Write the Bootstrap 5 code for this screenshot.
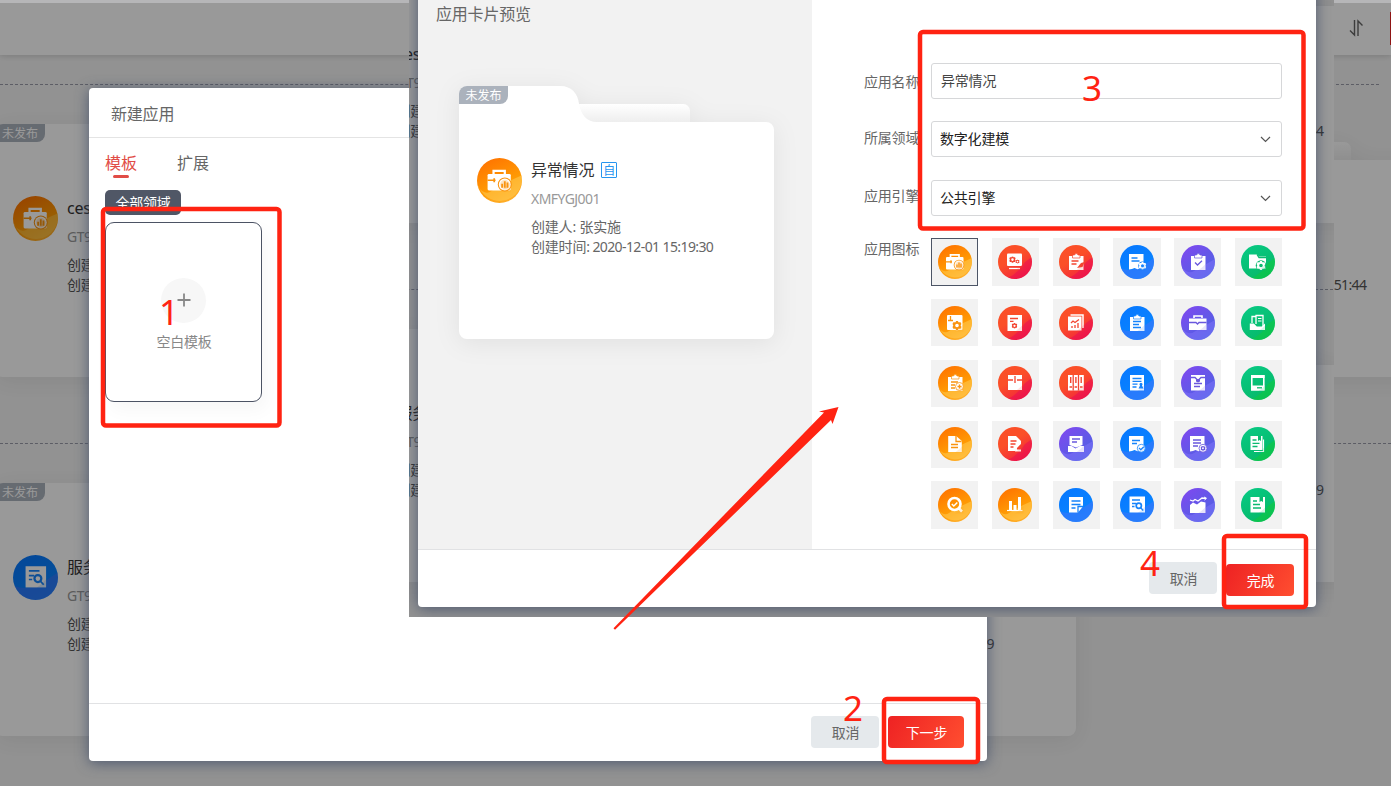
<!DOCTYPE html>
<html lang="zh-CN">
<head>
<meta charset="utf-8">
<title>新建应用</title>
<link href="https://cdn.jsdelivr.net/npm/bootstrap@5.3.0/dist/css/bootstrap.min.css" rel="stylesheet">
<style>
body{font-family:"Noto Sans","Noto Sans CJK SC",sans-serif;font-size:14px;line-height:20px;color:#666;width:1391px;height:786px;overflow:hidden;background:#939393;letter-spacing:-.2px}
.num{letter-spacing:-.54px}
.desk{height:786px;overflow:hidden}
.apps{width:1391px;background:#f4f4f4}
.apps-head{height:55px;background:#fff;box-shadow:0 1px 6px rgba(0,0,0,.16);padding-right:26px;position:relative}
.apps-head::after{content:"";position:absolute;right:0;top:12px;width:1px;height:33px;background:#e22}
.rule{border-top:1px dashed #9a9ca8}
.rule-a{width:1379px;margin-top:29px}
.apps-row{width:1454px;margin-left:-5px;gap:36.5px}
.folder{position:relative;height:253px;flex:none;width:336px;color:#555}
.folder>.shape{position:absolute;inset:0;overflow:visible;filter:drop-shadow(0 4px 12px rgba(0,0,0,.07))}
.folder>.inner{position:relative;padding:72px 0 0 18px}
.flag{position:absolute;left:0;top:0;width:49px;height:18px;background:#abb2bc;color:#fff;font-size:12px;line-height:19px;border-radius:8px 0 8px 0;text-align:center;letter-spacing:0}
.app-name{font-size:16px;line-height:22px;color:#333;padding-top:1px}
.app-code{line-height:20px;color:#999;margin-top:8px;margin-bottom:8px}
.shade{position:absolute;inset:0;background:rgba(0,0,0,.4)}
.topstrip{position:absolute;left:0;top:0;width:1391px;height:3px;background:#b6b6b8}
.dlg{position:absolute;background:#fff;width:898px;box-shadow:0 2px 14px rgba(55,70,100,.75)}
.dlg-one{left:89px;top:88px;height:673px;border-radius:4px}
.dlg-head{height:50px;font-size:16px;line-height:52px;padding-left:22px;border-bottom:1px solid #e4e4e4}
.dlg-foot{border-top:1px solid #e1e2e4;height:58px;padding:12px 22px 0}
.tab-on{color:#e14c46;position:relative}
.tab-on::after{content:"";position:absolute;left:8px;width:16px;top:24px;height:3px;border-radius:2px;background:#e14c46}
.chip{width:76px;height:25px;border-radius:5px;background:#505766;color:#fff;line-height:25px;text-align:center}
.blank{width:157px;height:180px;border:1px solid #4c5364;border-radius:9px;box-shadow:5px 8px 18px rgba(0,0,0,.035);color:#888}
.plus{width:45px;height:45px;border-radius:50%;background:#f7f7f7}
.btn-x{height:32px;border-radius:4px;line-height:33px;text-align:center;border:0;padding:0 0 0 1px;font-size:14px;letter-spacing:-.2px;background:#e5e9ec;color:#666;width:68px}
.btn-go{background:linear-gradient(120deg,#ee2223,#ff4e30);color:#fff;width:76px}
.shot{position:absolute;left:409px;top:0;width:925px;height:617px;overflow:hidden;background:#939393}
.shift{margin:-154px 0 0 -452px;width:1391px}
.dlg-two{left:9px;top:-40px;height:647px;border-radius:0 0 4px 4px}
.preview{width:394px;background:#f2f2f2;padding:44px 0 0 18px;font-size:16px}
.preview .folder{margin:62px 0 0 23px;font-size:14px;color:#666;width:315px}
.self{width:16px;height:16px;border:1px solid #2795f0;color:#2795f0;font-size:12px;line-height:15px;text-align:center;border-radius:1px;letter-spacing:0}
.lab{width:67px;flex:none}
.box{width:351px;height:36px;border:1px solid #d6d7d9;border-radius:3px;padding:0 10px 2px 9px;font-size:14px;letter-spacing:-.2px;color:#444;line-height:34px;box-shadow:none}
.sel{color:#222;padding:0 10px 0 8px}
.icons{display:grid;grid-template-columns:repeat(6,47.25px);gap:13.5px;grid-auto-rows:47.25px}
.tile{background:#f2f2f2;padding:6.6px}
.tile.on{outline:1px solid #4c5566;outline-offset:-1px}
.tile svg{width:34px;height:34px;display:block}
.big{width:45px;height:45px;display:block;flex:none}
.marks{position:absolute;left:0;top:0}
</style>
</head>
<body>
<svg width="0" height="0" style="position:absolute" aria-hidden="true"><defs>
<linearGradient id="go" x1=".2" y1="0" x2=".7" y2="1"><stop stop-color="#ff7200"/><stop offset=".6" stop-color="#ff9a04"/><stop offset="1" stop-color="#ffb02c"/></linearGradient>
<linearGradient id="gr" x1=".2" y1="0" x2=".8" y2="1"><stop offset=".4" stop-color="#fb4f28"/><stop offset="1" stop-color="#f0203f"/></linearGradient>
<linearGradient id="gb" x1=".2" y1="0" x2=".8" y2="1"><stop stop-color="#0778ff"/><stop offset="1" stop-color="#0a88ff"/></linearGradient>
<linearGradient id="gp" x1=".1" y1="0" x2=".9" y2="1"><stop stop-color="#8048f0"/><stop offset="1" stop-color="#4766e0"/></linearGradient>
<linearGradient id="gg" x1=".2" y1="0" x2=".8" y2="1"><stop stop-color="#08c983"/><stop offset="1" stop-color="#06b767"/></linearGradient>
<linearGradient id="bt" x1="0" y1="0" x2="0" y2="1"><stop stop-color="#fff"/><stop offset="1" stop-color="#ececec"/></linearGradient>
<clipPath id="disc"><circle cx="17" cy="17" r="17"/></clipPath>
<symbol id="gear" viewBox="-5 -5 10 10"><path d="M-1-4.6h2l.5 1.3 1-.1 1.200 0 1 1.800-.8 1.100v1l.8 1.100-1 1.800H2.400l-.9.1L1 4.600h-2l-.5-1.300-1.300.1-1 0-1-1.800.8-1.100v-1l-.8-1.100 1-1.800h1.300l1 .1zM0-1.900A1.900 1.900 0 1 0 0 1.900 1.900 1.900 0 1 0 0-1.900z" fill-rule="evenodd"/></symbol>
</defs></svg>

<div class="desk position-relative">
  <div id="page-a"></div>
  <div class="shade"></div>
  <div class="topstrip"></div>

  <section class="dlg dlg-one d-flex flex-column">
    <div class="dlg-head">新建应用</div>
    <div class="flex-grow-1 px-3">
      <div class="d-flex fs-6" style="padding-top:13px;gap:40px;line-height:24px;letter-spacing:0"><span class="tab-on">模板</span><span>扩展</span></div>
      <div class="chip" style="margin-top:15px">全部领域</div>
      <div class="blank d-flex flex-column align-items-center" style="margin-top:7px;padding-top:55px">
        <div class="plus d-flex align-items-center justify-content-center"><svg width="14" height="14" style="margin-top:-2px"><path d="M7 .5v13M.5 7h13" stroke="#888" stroke-width="1.800"/></svg></div>
        <div style="margin-top:9px;padding-left:1px">空白模板</div>
      </div>
    </div>
    <div class="dlg-foot d-flex justify-content-end" style="gap:9px;padding-right:23px"><button class="btn-x">取消</button><button class="btn-x btn-go">下一步</button></div>
  </section>

  <div class="shot">
    <div class="shift" id="page-b"></div>
    <div class="shade"></div>
    <section class="dlg dlg-two d-flex flex-column">
      <div class="d-flex flex-grow-1">
        <div class="preview">应用卡片预览
          <div class="folder">
            <svg class="shape" width="315" height="253"><path d="M115 18H224a7 7 0 0 1 7 7V38H115z" fill="url(#bt)"/><path d="M0 8a8 8 0 0 1 8-8H101c12 0 18 8 19 18 2 11 8 18 18 18H307a8 8 0 0 1 8 8V245a8 8 0 0 1-8 8H8a8 8 0 0 1-8-8z" fill="#fff"/></svg>
            <div class="flag">未发布</div>
            <div class="inner d-flex" style="gap:9px"><svg class="big" viewBox="0 0 34 34" data-icon="o0"></svg>
              <div>
                <div class="app-name d-flex align-items-center" style="gap:7px">异常情况<span class="self">自</span></div>
                <div class="app-code num">XMFYGJ001</div>
                <div>创建人: 张实施</div>
                <div>创建时间<span class="num" style="letter-spacing:-.6px">: 2020-12-01 15:19:30</span></div>
              </div></div>
          </div>
        </div>
        <div class="flex-grow-1" style="padding:103px 0 0 52px">
          <div class="d-flex"><div class="lab" style="padding-top:9px">应用名称</div><input class="form-control box" value="异常情况"></div>
          <div class="d-flex" style="margin-top:22px"><div class="lab" style="padding-top:7px">所属领域</div><div class="box sel d-flex justify-content-between align-items-center">数字化建模<svg width="11" height="7"><path d="M1 1l4.500 4.500L10 1" fill="none" stroke="#555" stroke-width="1.200"/></svg></div></div>
          <div class="d-flex" style="margin-top:23px"><div class="lab" style="padding-top:6px">应用引擎</div><div class="box sel d-flex justify-content-between align-items-center">公共引擎<svg width="11" height="7"><path d="M1 1l4.500 4.500L10 1" fill="none" stroke="#555" stroke-width="1.200"/></svg></div></div>
          <div class="d-flex" style="margin-top:22.400px"><div class="lab" style="padding-top:1px">应用图标</div><div class="icons" id="icons"></div></div>
        </div>
      </div>
      <div class="dlg-foot d-flex justify-content-end" style="gap:9px"><button class="btn-x">取消</button><button class="btn-x btn-go" style="width:68px;margin-top:2px;line-height:31px">完成</button></div>
    </section>
  </div>

  <svg class="marks" width="1391" height="786" fill="none" stroke="#ff2312" stroke-width="4.500">
    <rect x="103" y="209" width="176.500" height="216.500" rx="3"/>
    <rect x="920" y="32" width="383.500" height="196.500" rx="3"/>
    <rect x="884" y="699" width="94" height="63" rx="3"/>
    <rect x="1224" y="536" width="82" height="71" rx="3"/>
    <path d="M613.500 628.300L824 412.500 819 411.500 838.500 407 832.500 424 831 420 615 629.700z" fill="#ff2312" stroke="none"/>
    <g fill="#ff2312" stroke="none" font-size="35"><text x="159" y="325">1</text><text x="843" y="721">2</text><text x="1082" y="101">3</text><text x="1140" y="576">4</text></g>
  </svg>
</div>

<template id="page">
  <div class="apps">
    <div class="apps-head d-flex justify-content-end align-items-center"><svg width="17" height="18" viewBox="0 0 17 18" fill="none" stroke="#666" stroke-width="1.400"><path d="M6.500 1v15L2 11.500M10 17V2l4.500 4.500"/></svg></div>
    <div class="rule rule-a"></div>
    <div class="apps-row d-flex" style="margin-top:39px" data-row="1"></div>
    <div class="rule" style="margin-top:66px"></div>
    <div class="apps-row d-flex" style="margin-top:39px" data-row="2"></div>
    <div style="height:110px"></div>
  </div>
</template>

<script src="https://cdn.jsdelivr.net/npm/bootstrap@5.3.0/dist/js/bootstrap.bundle.min.js"></script>
<script>
// Glyphs on a 34 x 34 grid: white shapes, details in the disc's colour (currentColor)
const doc='<path d="M9 9h14.500v15l-3-1-3 1.200-3-1.200-2.500 1L9 24.500z"/>';
const L=d=>`<path d="${d}" fill="none" stroke="currentColor" stroke-width="1.300"/>`;
const W=(d,w=1.2)=>`<path d="${d}" fill="none" stroke="#fff" stroke-width="${w}"/>`;
const clip='<path d="M10 11h14.500v14H10z"/><path d="M13.500 13v-3h2a1.800 1.800 0 0 1 3.500 0h2v3z" stroke="currentColor" stroke-width=".7"/>';
const gear=(x,y,s,c)=>`<use href="#gear" x="${x-s}" y="${y-s}" width="${2*s}" height="${2*s}" fill="${c}"/>`;
const ring=(x,y,r=4)=>`<circle cx="${x}" cy="${y}" r="${r}" fill="#fff" stroke="currentColor" stroke-width=".8"/>`;
const G={
case1:'<rect x="8" y="12" width="17.500" height="12.500" rx="1"/>'+W('M12.500 12V9.800h8.500V12',1.700)+L('M8 16.800h6M13 15.300v3')+'<circle cx="21" cy="20" r="5.300" fill="currentColor"/><circle cx="21" cy="20" r="4.500" fill="#fff"/><circle cx="21" cy="20" r="3.500" fill="currentColor" opacity=".25"/><path d="M19 22.500v-3M21 22.500v-5M23 22.500v-4" stroke="currentColor" stroke-width="1.400"/>',
screen:'<rect x="9" y="8.500" width="15" height="12.500" rx="1"/>'+W('M11 23.500h11',1.300)+gear(14.500,14.600,3.400,'currentColor')+gear(19.500,16.600,2.200,'currentColor'),
clipPen:clip+L('M12.500 16h7M12.500 19h5')+'<path d="M18 23l4-5 3.500-1-2 5z" fill="currentColor"/>',
docGear:doc+L('M11.500 13h6M11.500 16h8')+'<circle cx="22.500" cy="20.700" r="4.300" fill="currentColor"/>'+gear(22.500,20.700,4,'#fff'),
clipCheck:clip+L('M14 17.500l2.500 2.500 4.500-4.300'),
foldGear:'<path d="M8 9.500h8l2 2h7v12H8z"/>'+L('M16 9.500l2 3h7')+'<circle cx="20" cy="20.500" r="5.300" fill="currentColor"/>'+gear(20,20.500,4.800,'#fff'),
winGear:'<rect x="9" y="9" width="15.500" height="15" rx="1"/>'+L('M12.500 10v4M10 14.500h5')+'<circle cx="19" cy="19.500" r="4.800" fill="#fff"/>'+gear(19,19.500,4.800,'currentColor'),
docDot:'<rect x="9.500" y="9" width="14.500" height="16"/>'+L('M12 12.500h8M12 15.300h3.500')+gear(16.500,19.800,3,'currentColor'),
chart:W('M11.500 9h12.500v13',1.500)+'<path d="M9 10.500h13.500V24.500H9z"/>'+L('M12 17l2-2 2 1.500 4-3M13 22v-2M16 22v-3M19 22v-5'),
clipLines:clip+L('M13 15.500h8M13 18.500h6M13 21.500h8'),
case2:'<path d="M8 12.500h17.500V24H8z"/>'+W('M13 12v-2h8v2',1.600)+L('M8 16.500h7l1.500 1.500L18 16.500h7.500'),
tray:W('M11 17v-6.500h3.500M15 18V9.500h7V20',1.300)+L('M17 13h3')+W('M17 12.500h3.500M17 15h3.500',1)+'<path d="M8.800 17.500h4l3 3h5l3.200-3V24H8.800z"/>',
clipPlus:clip+L('M13 16h7M13 19h4M13 22h4')+ring(21.500,20.500)+L('M19.500 20.500h4M21.500 18.500v4'),
box:'<path d="M10 9h14v15H10z"/>'+L('M10 14h5M19 14h5M17 10v7'),
binders:'<path d="M9 9h15.800v15.500H9z"/>'+L('M14.200 9v15.500M19.500 9v15.500')+'<path d="M11 11v6h1.400v-6zM16.200 11v6h1.400v-6zM21.500 11v6h1.400v-6z" fill="currentColor"/>'+L('M10.500 21h2.500M15.600 21h2.500M21 21h2.500'),
docMan:'<path d="M10 9h14v15.500H10z"/>'+L('M12.500 12.500h9M12.500 15.300h9M12.500 18.200h5M12.500 21h4')+'<path d="M18.500 22.500h5l-1.500-3a1.500 1.500 0 1 0-2 0z" fill="currentColor"/>',
env:'<path d="M10 9h14v15.500H10z"/>'+L('M10 11.500h4l3 3 3-3h4M13 17.500h8M13 20.500h6')+'<path d="M15 13.500h4v2l-2 1-2-1z" fill="currentColor"/>',
pad:W('M10.800 9.700h12v14h-12z',1.600)+'<path d="M10 9h13.500v3H10zM10 19.500h13.500v5H10z"/>'+L('M16 21.800h5'),
docFold:'<path d="M10.200 9h8l5.600 5v11H10.200z"/>'+L('M18 9v5.500h5.500M13 17.500h7M13 20.500h7'),
docPen:'<path d="M10 9h8l5 5v3l-6 7H10z"/>'+L('M12.500 14h6M12.500 17h5M12.500 20h3M18 23l5-5')+W('M18 20v3.500h5',1.800),
inbox:'<path d="M10.500 9h13v9l-6.500 2.500-6.500-2.500zM9 19h3.500l4 2.500 4.500-2.500h4v6H9z"/>'+L('M13 12h8M13 15h5'),
docOk:doc+L('M12 13.500h8M12 16.500h5')+ring(21.300,21.300)+L('M19 21l1.800 1.700 3-3'),
docStar:doc+L('M12 13h8M12 16h8M12 19h5')+ring(22,21.300)+gear(22,21.300,2.600,'currentColor'),
book2:W('M22.500 12.500V24.500H13',1.200)+'<path d="M9.500 9h12v14h-12z"/>'+L('M11.500 13h4M11.500 16.300h7M11.500 19.500h5')+'<path d="M17 9v5l1.500-1 1.500 1V9z" fill="currentColor"/>',
seek:'<circle cx="16.500" cy="16" r="6" fill="none" stroke="#fff" stroke-width="2.600"/>'+W('M20.500 20l3.500 3.500',2.600)+W('M13.800 16l2 2 3.500-3.500',1.500),
bars:W('M9 22.500h15.500',1.200)+'<path d="M11 13h3v9h-3zM15.500 17h3v5h-3zM20 9h3v13h-3z"/>',
note:'<path d="M10 9h14v9.500l-5 6H10z"/>'+L('M12.500 13h9M12.500 16.500h9M12.500 20h4M19 24.500v-6h5'),
docFind:'<path d="M9.500 8.500h15.500v16H9.500z"/>'+L('M12 12h8M12 15.500h4M12 18.500h2.500')+'<circle cx="18.800" cy="17.800" r="2.600" fill="none" stroke="currentColor" stroke-width="1.700"/>'+L('M20.500 19.500l2.700 3'),
area:'<path d="M9 17l3-2.500 4 2 4-3 4.500 1V25H9z"/>'+W('M9 12l3 1 2-1.500 3 1.500 4-3 4 .5',1.300)+W('M23 9l2.500 1.300-2 1.700',1),
book:'<path d="M9.500 9h14.500v15.500H9.500z"/>'+L('M12 13h4M12 16.500h7M12 20h8')+'<path d="M18.500 9v5l1.800-1 1.700 1V9z" fill="currentColor"/>'
};
const tone={
o:['#f99410','M0 21Q6 29 11 25 20 19 34 13V17A17 17 0 0 1 1 21z','#ffcf58'],
r:['#f34531','M10 33Q20 28 27 17L34 12A17 17 0 0 1 10 33z','#e8005c'],
b:['#1684fb','M0 23Q10 27 18 23 26 19 34 13A17 17 0 0 1 2 25z','#5470f8'],
p:['#6a58dd','M0 22Q8 30 13 26L34 14A17 17 0 0 1 1 23z','#8a78ff'],
g:['#0bba70','M10 33Q21 29 27 18L34 13A17 17 0 0 1 10 33z','#12cf2e']};
function draw(t,g){const[c,w,wc]=tone[t];
 return `<circle cx="17" cy="17" r="17" fill="url(#g${t})"/><path d="${w}" fill="${wc}" opacity="${t=='o'?.5:.42}" clip-path="url(#disc)"/><g fill="#fff" style="color:${c}">${G[g]}</g><path d="M17 25.500Q22 22 25.500 18V25.500z" fill="${c}" opacity=".16"/>`;}
const grid=['o case1','r screen','r clipPen','b docGear','p clipCheck','g foldGear',
'o winGear','r docDot','r chart','b clipLines','p case2','g tray',
'o clipPlus','r box','r binders','b docMan','p env','g pad',
'o docFold','r docPen','p inbox','b docOk','p docStar','g book2',
'o seek','o bars','b note','b docFind','p area','g book'];
document.getElementById('icons').innerHTML=grid.map((s,i)=>`<div class="tile${i?'':' on'}"><svg viewBox="0 0 34 34">${draw(...s.split(' '))}</svg></div>`).join('');
document.querySelector('[data-icon=o0]').innerHTML=draw('o','case1');

// App list behind the dialogs
const card=(t,g,name,end)=>`<div class="folder"><svg class="shape" width="336" height="253"><path d="M115 18H231a7 7 0 0 1 7 7V38H115z" fill="url(#bt)"/><path d="M0 8a8 8 0 0 1 8-8H101c12 0 18 8 19 18 2 11 8 18 18 18H328a8 8 0 0 1 8 8V245a8 8 0 0 1-8 8H8a8 8 0 0 1-8-8z" fill="#fff"/></svg><div class="flag" style="width:50px">未发布</div><div class="inner d-flex" style="gap:9px"><svg class="big" viewBox="0 0 34 34">${draw(t,g)}</svg><div><div class="app-name">${name}</div><div class="app-code num">GT9001</div><div>创建人: 张实施</div><div>创建时间<span class="num" style="letter-spacing:-.62px">: 2020-11-30 ${end}</span></div></div></div></div>`;
function fill(id,last){const n=document.getElementById('page').content.cloneNode(true);
 n.querySelector('[data-row="1"]').innerHTML=card('o','case1','ces01','10:51:44').repeat(4);
 n.querySelector('[data-row="2"]').innerHTML=card('b','docFind','服务','09:12:09').repeat(last);
 document.getElementById(id).append(n);}
fill('page-a',3);fill('page-b',4);
</script>
</body>
</html>
